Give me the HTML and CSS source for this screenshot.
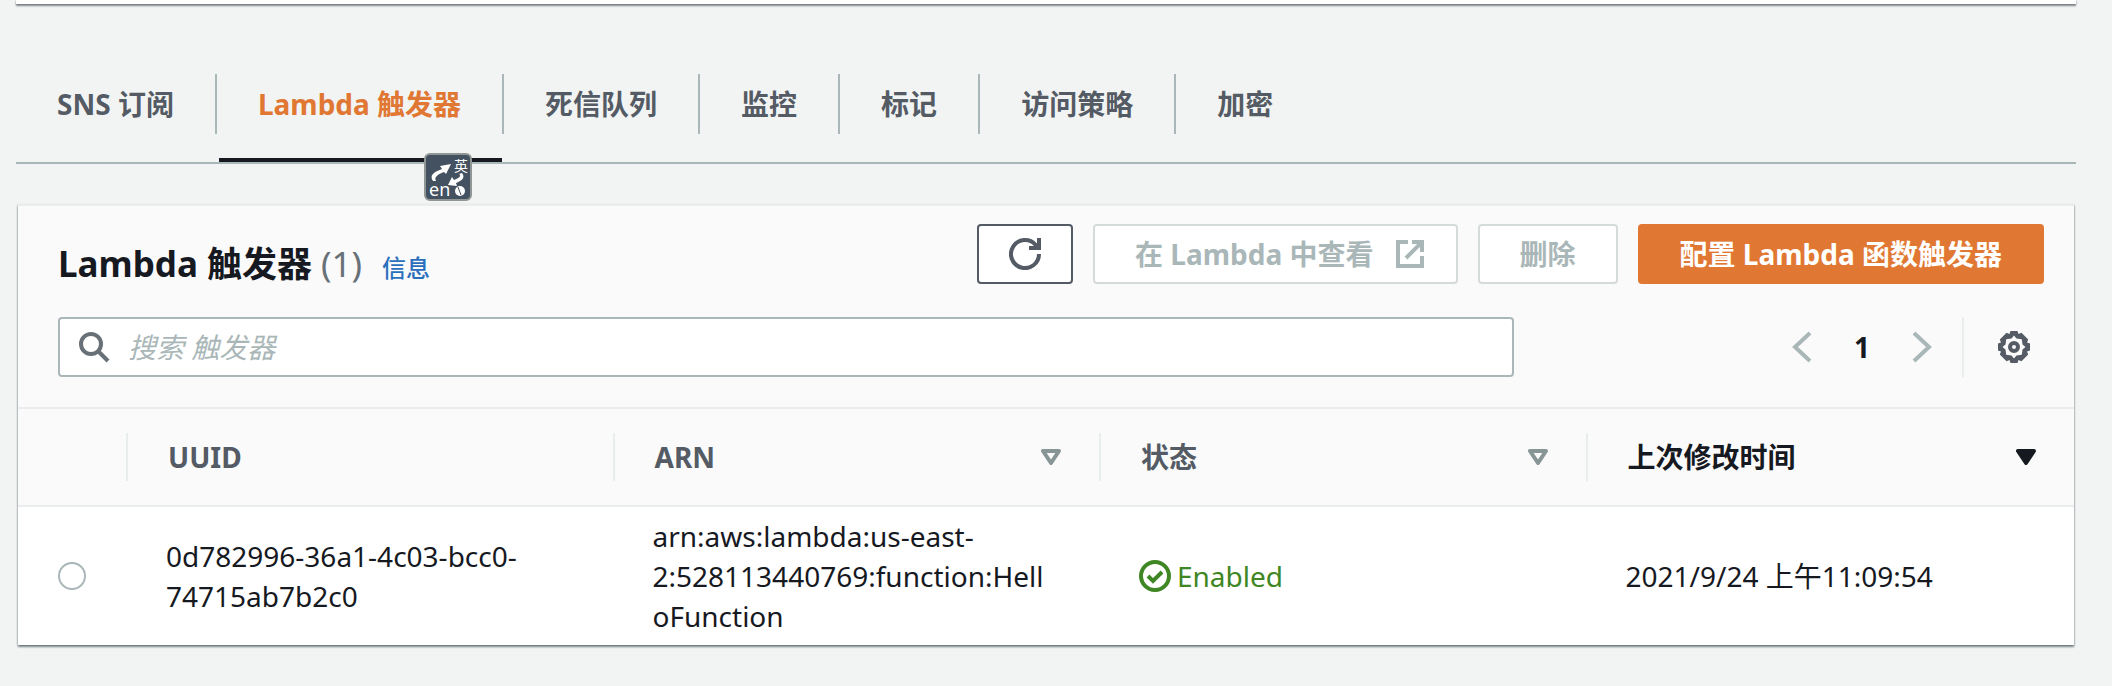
FILE: index.html
```html
<!DOCTYPE html>
<html lang="zh-CN">
<head>
<meta charset="utf-8">
<meta name="viewport" content="width=device-width, initial-scale=1">
<title>Lambda 触发器</title>
<link rel="stylesheet" href="styles.css">
</head>
<body>
<div class="page">
  <section class="details"></section>

  <nav class="tabs">
    <ul class="tab-list">
      <li class="tab"><a href="#sns">SNS 订阅</a></li>
      <li class="tab tab-active">
        <a href="#lambda" aria-current="page">Lambda 触发器</a>
        <span class="translate">
          <svg class="translate-arrows" viewBox="0 0 42 44" aria-hidden="true">
            <path d="M7 26C3 20 8 17 16 14L14 11L25 9L20 19L18 17C11 20 8 22 10 26Z"/>
            <path d="M36 18C40 23 35 26 30 28L31 31L22 30L26 22L28 25C33 23 36 21 33 19Z"/>
            <circle cx="34" cy="36" r="5"/>
            <path class="translate-line" d="M32 32L35 40"/>
          </svg>
          <span class="translate-to">英</span>
          <span class="translate-from">en</span>
        </span>
      </li>
      <li class="tab"><a href="#dlq">死信队列</a></li>
      <li class="tab"><a href="#monitor">监控</a></li>
      <li class="tab"><a href="#tags">标记</a></li>
      <li class="tab"><a href="#policy">访问策略</a></li>
      <li class="tab"><a href="#encryption">加密</a></li>
    </ul>
  </nav>

  <main class="card">
    <header class="card-header">
      <div class="title-row">
        <div class="title">
          <h2>Lambda 触发器 <span class="count">(1)</span></h2>
          <a class="info" href="#info">信息</a>
        </div>
        <div class="actions">
          <button class="btn btn-icon" type="button" aria-label="刷新">
            <svg class="icon" viewBox="0 0 32 32" aria-hidden="true"><path d="M30 16A14 14 0 1 1 26.5 6.800L29 10M30 0V10H20" /></svg>
          </button>
          <button class="btn btn-external" type="button" disabled>在 Lambda 中查看
            <svg class="icon" viewBox="0 0 32 32" aria-hidden="true"><path d="M14 4H4V28H28V18M18 4H28V14M28 4L12 20"/></svg>
          </button>
          <button class="btn" type="button" disabled>删除</button>
          <button class="btn btn-primary" type="button">配置 Lambda 函数触发器</button>
        </div>
      </div>
      <div class="filter-row">
        <label class="search">
          <svg class="icon" viewBox="0 0 32 32" aria-hidden="true"><circle cx="13" cy="13" r="10"/><path d="M20 20L30 30"/></svg>
          <input type="text" placeholder="搜索 触发器" aria-label="搜索 触发器">
        </label>
        <div class="paging">
          <button class="page-btn" type="button" disabled aria-label="上一页">
            <svg class="icon" viewBox="0 0 32 32" aria-hidden="true"><path d="M24 2L9 16L24 30"/></svg>
          </button>
          <button class="page-btn page-current" type="button">1</button>
          <button class="page-btn" type="button" disabled aria-label="下一页">
            <svg class="icon" viewBox="0 0 32 32" aria-hidden="true"><path d="M8 2L23 16L8 30"/></svg>
          </button>
          <span class="divider"></span>
          <button class="page-btn" type="button" aria-label="首选项">
            <svg class="icon gear" viewBox="0 0 32 32" aria-hidden="true">
              <path fill-rule="evenodd" d="M12.500 0H19.500L20.500 3L23.500 1.800L30.200 8.500L29 11.500L32 12.500V19.500L29 20.500L30.200 23.500L23.500 30.200L20.500 29L19.500 32H12.500L11.500 29L8.500 30.200L1.800 23.500L3 20.500L0 19.500V12.500L3 11.500L1.800 8.500L8.500 1.800L11.500 3ZM16 4.500L13.500 7.500L8.200 8.200L7.500 13.500L4.500 16L7.500 18.500L8.200 23.800L13.500 24.500L16 27.500L18.500 24.500L23.800 23.800L24.500 18.500L27.500 16L24.500 13.500L23.800 8.200L18.500 7.500Z"/>
              <path fill-rule="evenodd" d="M16 10A6 6 0 1 0 16 22A6 6 0 1 0 16 10ZM16 14A2 2 0 1 1 16 18A2 2 0 1 1 16 14Z"/>
            </svg>
          </button>
        </div>
      </div>
    </header>

    <table class="triggers">
      <thead>
        <tr>
          <th class="col-select" scope="col"><div class="head"></div></th>
          <th scope="col"><div class="head">UUID</div></th>
          <th scope="col"><div class="head">ARN
            <svg class="sort" viewBox="0 0 20 16" aria-hidden="true"><path d="M2 2H18L10 14Z"/></svg></div></th>
          <th scope="col"><div class="head">状态
            <svg class="sort" viewBox="0 0 20 16" aria-hidden="true"><path d="M2 2H18L10 14Z"/></svg></div></th>
          <th class="sorted" scope="col" aria-sort="descending"><div class="head">上次修改时间
            <svg class="sort" viewBox="0 0 20 16" aria-hidden="true"><path d="M2 2H18L10 14Z"/></svg></div></th>
        </tr>
      </thead>
      <tbody>
        <tr>
          <td class="col-select"><input class="radio" type="radio" name="trigger" aria-label="选择触发器"></td>
          <td>0d782996-36a1-4c03-bcc0-74715ab7b2c0</td>
          <td>arn:aws:lambda:us-east-2:528113440769:function:HelloFunction</td>
          <td><span class="status">
            <svg class="icon" viewBox="0 0 32 32" aria-hidden="true"><circle cx="16" cy="16" r="14"/><path d="M9 16L14 21L23 12"/></svg>Enabled</span></td>
          <td>2021/9/24 上午11:09:54</td>
        </tr>
      </tbody>
    </table>
  </main>
</div>
</body>
</html>
```
FILE: styles.css
```css
* {
  box-sizing: border-box;
}

body {
  margin: 0;
  background: #f2f3f3;
  color: #16191f;
  font: 28px/40px "Noto Sans", "Noto Sans CJK SC", sans-serif;
}

button,
input {
  font: inherit;
}

a {
  text-decoration: none;
}

.page {
  padding: 0 36px 30px 16px;
}

.details {
  height: 4px;
  background: #fff;
  box-shadow: 0 2px 2px rgba(0, 7, 22, 0.45), 0 0 2px rgba(0, 7, 22, 0.3);
}

.icon {
  flex: none;
  width: 32px;
  height: 32px;
  fill: none;
  stroke: currentColor;
  stroke-width: 4px;
}

.gear {
  fill: currentColor;
  stroke: none;
}

/* Tabs */
.tabs {
  margin-top: 70px;
  border-bottom: 2px solid #aab7b8;
}

.tab-list {
  display: flex;
  margin: 0;
  padding: 0;
  list-style: none;
}

.tab {
  position: relative;
  padding-bottom: 28px;
}

.tab a {
  display: block;
  padding: 0 41px;
  border-right: 2px solid #aab7b8;
  color: #545b64;
  font-weight: 700;
  line-height: 60px;
}

.tab:last-child a {
  border-right: 0;
}

.tab-active a {
  color: #e07732;
}

.tab-active::after {
  position: absolute;
  right: 2px;
  bottom: 0;
  left: 2px;
  height: 4px;
  background: #16191f;
  content: "";
}

.translate {
  position: absolute;
  right: 32px;
  bottom: -39px;
  z-index: 1;
  width: 48px;
  height: 48px;
  border: 2px solid #909694;
  border-radius: 6px;
  background: #435160;
  color: #fff;
}

.translate-arrows {
  display: block;
  width: 42px;
  height: 44px;
  fill: #fff;
}

.translate-line {
  stroke: #435160;
}

.translate-to,
.translate-from {
  position: absolute;
  line-height: 16px;
}

.translate-to {
  top: 3px;
  right: 2px;
  font-size: 14px;
}

.translate-from {
  bottom: 2px;
  left: 3px;
  font-size: 18px;
}

/* Card */
.card {
  margin: 40px 2px 0;
  border-top: 2px solid #eaeded;
  background: #fff;
  box-shadow: 0 2px 2px rgba(0, 28, 36, 0.4), 0 1px 2px rgba(0, 28, 36, 0.35);
}

.card-header {
  padding: 18px 30px 30px 40px;
  border-bottom: 2px solid #eaeded;
  background: #fafafa;
}

.title-row {
  display: flex;
  align-items: flex-start;
  justify-content: space-between;
}

.title {
  display: flex;
  align-items: baseline;
  gap: 20px;
  padding-top: 20px;
}

.title h2 {
  margin: 0;
  font-size: 35px;
  line-height: 40px;
}

.count {
  color: #687078;
  font-weight: 400;
}

.info {
  color: #2a6fbd;
  font-size: 24px;
  font-weight: 500;
  line-height: 32px;
}

.actions {
  display: flex;
  gap: 20px;
}

.btn {
  display: flex;
  align-items: center;
  justify-content: center;
  gap: 20px;
  height: 60px;
  padding: 0 40px;
  border: 2px solid #545b64;
  border-radius: 4px;
  background: #fff;
  color: #545b64;
  font-weight: 700;
}

.btn:disabled {
  border-color: #d5dbdb;
  color: #aab7b8;
}

.btn-icon {
  padding: 0 30px;
}

.btn-external {
  padding-right: 30px;
}

.btn-primary {
  border-color: #e07732;
  background: #e07732;
  color: #fff;
}

.filter-row {
  display: grid;
  grid-template-columns: 11fr 4fr;
  margin-top: 33px;
}

.search {
  display: flex;
  align-items: center;
  gap: 18px;
  height: 60px;
  padding: 0 18px;
  border: 2px solid #aab7b8;
  border-radius: 4px;
  background: #fff;
  color: #687078;
}

.search input {
  flex: 1;
  min-width: 0;
  padding: 0;
  border: 0;
  outline: 0;
  background: none;
  color: #16191f;
}

.search input::placeholder {
  color: #aab7b8;
  font-style: italic;
  opacity: 1;
}

.paging {
  display: flex;
  justify-content: flex-end;
}

.page-btn {
  display: flex;
  align-items: center;
  justify-content: center;
  width: 60px;
  height: 60px;
  padding: 0;
  border: 0;
  background: none;
  color: #545b64;
}

.page-btn:disabled {
  color: #aab7b8;
}

.page-current {
  color: #16191f;
  font-weight: 700;
}

.divider {
  width: 2px;
  margin: 0 20px 0 10px;
  background: #eaeded;
}

/* Table */
.triggers {
  width: 100%;
  border-collapse: collapse;
  table-layout: fixed;
}

.triggers th {
  padding: 24px 0;
  border-bottom: 2px solid #eaeded;
  background: #fafafa;
  color: #545b64;
  text-align: left;
}

.head {
  display: flex;
  align-items: center;
  justify-content: space-between;
  height: 48px;
  padding: 0 38px 0 40px;
  border-right: 2px solid #eaeded;
}

.triggers th:last-child .head {
  border-right: 0;
}

.sort {
  flex: none;
  width: 20px;
  height: 16px;
  fill: none;
  stroke: #879596;
  stroke-linejoin: round;
  stroke-width: 4px;
}

.triggers .sorted {
  color: #16191f;
}

.sorted .sort {
  fill: #16191f;
  stroke: #16191f;
}

.triggers td {
  padding: 9px 48px 9px 38px;
  overflow-wrap: anywhere;
}

.triggers .col-select {
  width: 110px;
}

.triggers td.col-select {
  padding: 0 0 0 40px;
}

.radio {
  display: block;
  width: 28px;
  height: 28px;
  margin: 0;
  border: 2px solid #aab7b8;
  border-radius: 50%;
  background: #fff;
  appearance: none;
}

.status {
  display: flex;
  align-items: center;
  gap: 6px;
  color: #3f8624;
}
```
